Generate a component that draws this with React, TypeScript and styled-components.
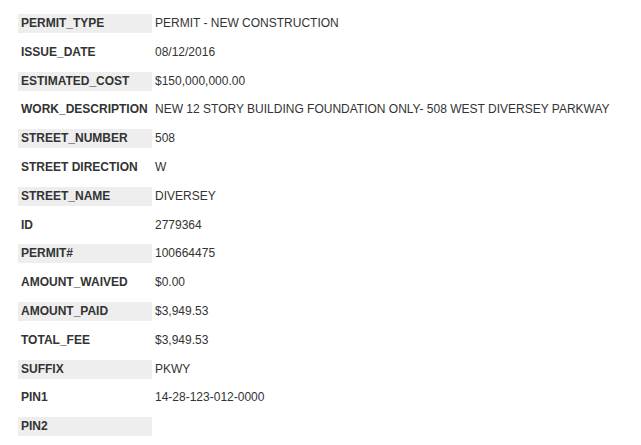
import React from "react";
import styled, { createGlobalStyle } from "styled-components";

const GlobalStyle = createGlobalStyle`
    body {
        margin: 0;
        background: #fff;
        font-family: "Liberation Sans", Arial, Helvetica, sans-serif;
        color: #333;
    }
`;

interface Field {
    name: string;
    value: string;
}

const fields: Field[] = [
    { name: "PERMIT_TYPE", value: "PERMIT - NEW CONSTRUCTION" },
    { name: "ISSUE_DATE", value: "08/12/2016" },
    { name: "ESTIMATED_COST", value: "$150,000,000.00" },
    { name: "WORK_DESCRIPTION", value: "NEW 12 STORY BUILDING FOUNDATION ONLY- 508 WEST DIVERSEY PARKWAY" },
    { name: "STREET_NUMBER", value: "508" },
    { name: "STREET DIRECTION", value: "W" },
    { name: "STREET_NAME", value: "DIVERSEY" },
    { name: "ID", value: "2779364" },
    { name: "PERMIT#", value: "100664475" },
    { name: "AMOUNT_WAIVED", value: "$0.00" },
    { name: "AMOUNT_PAID", value: "$3,949.53" },
    { name: "TOTAL_FEE", value: "$3,949.53" },
    { name: "SUFFIX", value: "PKWY" },
    { name: "PIN1", value: "14-28-123-012-0000" },
    { name: "PIN2", value: "" },
];

const List = styled.div`
    display: grid;
    grid-template-columns: 134px 1fr;
    row-gap: 9.8px;
    padding: 14px 0 0 18px;
`;

const Label = styled.div<{ $shaded: boolean }>`
    height: 19px;
    line-height: 19px;
    padding-left: 3px;
    font-size: 12px;
    font-weight: bold;
    white-space: nowrap;
    background: ${(p) => (p.$shaded ? "#eeeeee" : "transparent")};
`;

const Value = styled.div`
    height: 19px;
    line-height: 19px;
    padding-left: 3px;
    font-size: 12px;
    white-space: nowrap;
`;

export default function App() {
    return (
        <>
            <GlobalStyle />
            <List>
                {fields.map((f, i) => (
                    <React.Fragment key={f.name}>
                        <Label $shaded={i % 2 === 0}>{f.name}</Label>
                        <Value>{f.value}</Value>
                    </React.Fragment>
                ))}
            </List>
        </>
    );
}
